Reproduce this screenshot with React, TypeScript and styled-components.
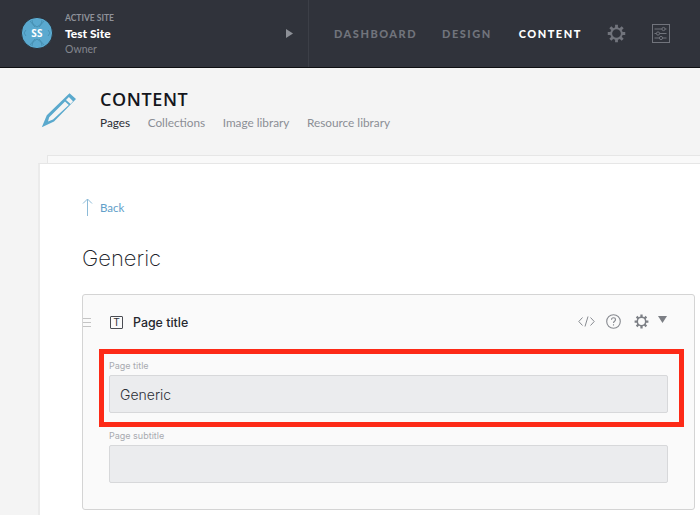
import React from "react";
import styled, { createGlobalStyle } from "styled-components";

const Global = createGlobalStyle`
  html, body { margin: 0; padding: 0; height: 515px; overflow: hidden; background: #f4f4f4; }
  body { font-family: "Lato", "Liberation Sans", sans-serif; }
  * { box-sizing: border-box; }
`;

const Page = styled.div`
  width: 700px;
  height: 515px;
  overflow: hidden;
  display: flex;
  flex-direction: column;
`;

const TopBar = styled.header`
  height: 68px;
  flex: none;
  background: #30333b;
  border-bottom: 1px solid #0f1012;
  display: flex;
`;

const SiteSwitcher = styled.div`
  width: 309px;
  flex: none;
  border-right: 1px solid #3c3f47;
  display: flex;
  align-items: center;
  padding: 0 15px 1px 21px;
`;

const Avatar = styled.div`
  width: 32px;
  height: 32px;
  position: relative;
  flex: none;
  margin-right: 12px;
  display: flex;
  align-items: center;
  justify-content: center;
  color: #fff;
  font: 700 10px "Open Sans", sans-serif;
  letter-spacing: 0.2px;
  & > svg { position: absolute; inset: 0; }
  & > span { position: relative; }
`;

const SiteText = styled.div`
  flex: 1;
  align-self: flex-start;
  margin-top: 13px;
  display: flex;
  flex-direction: column;
`;

const SiteKicker = styled.div`
  font-size: 8.5px;
  line-height: 11px;
  color: #8f929a;
  font-weight: 700;
  margin-bottom: 2px;
`;

const SiteName = styled.div`
  font-size: 12px;
  line-height: 15px;
  font-weight: 900;
  color: #fff;
  margin-bottom: 1px;
`;

const SiteRole = styled.div`
  font-size: 10.5px;
  line-height: 14px;
  color: #83868e;
`;

const MainNav = styled.nav`
  display: flex;
  align-items: center;
  padding-left: 25px;
  padding-bottom: 1px;
`;

const NavLink = styled.a<{ $active?: boolean; $gap: number }>`
  font-size: 11px;
  font-weight: 900;
  letter-spacing: 1.5px;
  color: ${(p) => (p.$active ? "#ffffff" : "#71747c")};
  margin-right: ${(p) => p.$gap}px;
  white-space: nowrap;
`;

const NavIcon = styled.span<{ $gap?: number }>`
  display: flex;
  margin-right: ${(p) => p.$gap ?? 0}px;
`;

const SubHeader = styled.div`
  height: 87px;
  flex: none;
  display: flex;
  padding: 21px 0 0 41px;
`;

const PencilSlot = styled.div`
  width: 59px;
  flex: none;
  margin-top: 3px;
`;

const SectionTitle = styled.h1`
  margin: 0;
  font-family: "Open Sans", sans-serif;
  font-size: 18px;
  line-height: 20px;
  font-weight: 600;
  letter-spacing: 0.6px;
  color: #14161c;
`;

const Tabs = styled.div`
  display: flex;
  gap: 17.5px;
  margin-top: 6px;
`;

const Tab = styled.a<{ $active?: boolean }>`
  font-size: 11.8px;
  line-height: 16px;
  color: ${(p) => (p.$active ? "#2c2f36" : "#8b8e94")};
  white-space: nowrap;
`;

const Stage = styled.div`
  flex: 1;
  padding-left: 38px;
  display: flex;
  flex-direction: column;
`;

const BackSheet = styled.div`
  height: 8px;
  flex: none;
  margin-left: 9px;
  background: #f9f9f9;
  border-top: 1px solid #e6e6e6;
  border-left: 1px solid #e6e6e6;
`;

const Sheet = styled.main`
  flex: 1;
  background: #fff;
  border-top: 1px solid #e6e6e6;
  border-left: 2px solid #ebebeb;
  padding: 34px 6px 0 42px;
`;

const BackLink = styled.a`
  display: flex;
  align-items: center;
  gap: 7px;
  height: 18px;
  font-size: 11.5px;
  color: #62a0c9;
`;

const Heading = styled.h2`
  margin: 27px 0 0;
  font-family: "Inter", sans-serif;
  font-size: 22px;
  line-height: 30px;
  font-weight: 200;
  color: #20232a;
`;

const Panel = styled.section`
  position: relative;
  margin-top: 21px;
  width: 613px;
  height: 216px;
  background: #fafafa;
  border: 1px solid #d4d4d4;
  border-radius: 3px;
  padding: 0 26px 0 26px;
`;

const Handle = styled.span`
  position: absolute;
  left: 0;
  top: 23px;
  width: 8px;
  height: 9px;
  border-top: 1px solid #c4c4c4;
  border-bottom: 1px solid #c4c4c4;
  &::after {
    content: "";
    display: block;
    margin-top: 3px;
    height: 1px;
    background: #c4c4c4;
  }
`;

const PanelHead = styled.div`
  height: 54px;
  display: flex;
  align-items: center;
  padding-top: 1px;
`;

const TypeBadge = styled.span`
  width: 13px;
  height: 13px;
  border: 1px solid #4a4c52;
  border-radius: 1px;
  display: flex;
  align-items: center;
  justify-content: center;
  font: 500 10px "Liberation Sans", sans-serif;
  color: #33353b;
  margin: 0 10px 0 1px;
`;

const PanelTitle = styled.span`
  flex: 1;
  font-family: "Inter", sans-serif;
  font-size: 12.4px;
  font-weight: 500;
  color: #26282e;
`;

const PanelTools = styled.div`
  display: flex;
  align-items: center;
  margin: 0 1px 2px 0;
`;

const Tool = styled.span<{ $gap: number }>`
  display: flex;
  margin-right: ${(p) => p.$gap}px;
`;

const Caret = styled.svg`
  margin-bottom: 5px;
`;

const Field = styled.div`
  margin-bottom: 17px;
`;

const FieldLabel = styled.label`
  display: block;
  font-family: "Inter", sans-serif;
  font-size: 9px;
  line-height: 12px;
  margin: 11px 0 3px;
  color: #a8aab0;
`;

const TextBox = styled.div`
  width: 559px;
  height: 38px;
  background: #ebecee;
  border: 1px solid #d7d8da;
  border-radius: 2px;
  padding-left: 10px;
  display: flex;
  align-items: center;
  font-family: "Inter", sans-serif;
  font-size: 14px;
  font-weight: 300;
  color: #2d3037;
`;

const Callout = styled.div`
  position: absolute;
  left: 16px;
  top: 54px;
  width: 585px;
  height: 78px;
  border: 5px solid #fd2a17;
  pointer-events: none;
`;

const Gear = ({ size, color }: { size: number; color: string }) => (
  <svg width={size} height={size} viewBox="0 0 20 20" fill="none" stroke={color}>
    <circle cx="10" cy="10" r="5.6" strokeWidth="2" />
    <g strokeWidth="3">
      <path d="M10 .8v3.4M10 15.8v3.4M.8 10h3.4M15.8 10h3.4M3.5 3.5l2.4 2.4M14.1 14.1l2.4 2.4M16.5 3.5l-2.4 2.4M5.9 14.1l-2.4 2.4" />
    </g>
  </svg>
);

const Sliders = () => (
  <svg width="18" height="19" viewBox="0 0 18 19" fill="none" stroke="#71747c" strokeWidth="1">
    <rect x=".5" y=".5" width="17" height="18" />
    <path d="M2.5 5h12M2.5 9.5h12M2.5 14h12" />
    <circle cx="11.5" cy="5" r="1.6" fill="#30333b" />
    <circle cx="6" cy="9.5" r="1.6" fill="#30333b" />
    <circle cx="9" cy="14" r="1.6" fill="#30333b" />
  </svg>
);

const Logo = () => (
  <svg width="32" height="32" viewBox="0 0 32 32" fill="none">
    <circle cx="16" cy="16" r="15.6" fill="#5aa9cf" stroke="#23262c" strokeWidth=".8" />
    <g stroke="#3a7f9f" strokeWidth=".6">
      <path d="M9 4l5 6M23 4l-5 6M9 28l5-6M23 28l-5-6" />
      <path d="M11 3c0 3 1.5 5 5 7 3.5-2 5-4 5-7M11 29c0-3 1.5-5 5-7 3.5 2 5 4 5 7" />
      <path d="M5 13l-2 3 2 3M27 13l2 3-2 3" />
    </g>
  </svg>
);

const Pencil = () => (
  <svg width="36" height="36" viewBox="0 0 36 36">
    <path
      d="M28.5 1.2 35 7 13 29.6 0.8 35.2 5.8 23.2Z M27.9 5 25 8 29.6 12.1 32 9.2 Z M24 9.6 8.2 25.2 7 29.6 12 27.6 27.8 12.9Z"
      fill="#5aa9cd"
      fillRule="evenodd"
    />
  </svg>
);

const Arrow = () => (
  <svg width="11" height="18" viewBox="0 0 11 18" fill="none" stroke="#8dbbd8" strokeWidth="1">
    <path d="M5.5 18V1M1 5.5 5.5 1 10 5.5" />
  </svg>
);

export default function App() {
  return (
    <Page>
      <Global />
      <TopBar>
        <SiteSwitcher>
          <Avatar>
            <Logo />
            <span>SS</span>
          </Avatar>
          <SiteText>
            <SiteKicker>ACTIVE SITE</SiteKicker>
            <SiteName>Test Site</SiteName>
            <SiteRole>Owner</SiteRole>
          </SiteText>
          <svg width="7" height="9" viewBox="0 0 7 9">
            <path d="M0 0l7 4.5L0 9z" fill="#8d9097" />
          </svg>
        </SiteSwitcher>
        <MainNav>
          <NavLink $gap={25}>DASHBOARD</NavLink>
          <NavLink $gap={27}>DESIGN</NavLink>
          <NavLink $active $gap={25}>CONTENT</NavLink>
          <NavIcon $gap={26}>
            <Gear size={19} color="#71747c" />
          </NavIcon>
          <NavIcon>
            <Sliders />
          </NavIcon>
        </MainNav>
      </TopBar>

      <SubHeader>
        <PencilSlot>
          <Pencil />
        </PencilSlot>
        <div>
          <SectionTitle>CONTENT</SectionTitle>
          <Tabs>
            <Tab $active>Pages</Tab>
            <Tab>Collections</Tab>
            <Tab>Image library</Tab>
            <Tab>Resource library</Tab>
          </Tabs>
        </div>
      </SubHeader>

      <Stage>
        <BackSheet />
        <Sheet>
          <BackLink>
            <Arrow />
            Back
          </BackLink>
          <Heading>Generic</Heading>
          <Panel>
            <Handle />
            <PanelHead>
              <TypeBadge>T</TypeBadge>
              <PanelTitle>Page title</PanelTitle>
              <PanelTools>
                <Tool $gap={11}>
                  <svg width="17" height="11" viewBox="0 0 17 11" fill="none" stroke="#878a90" strokeWidth="1">
                    <path d="M4.5 1.5.8 5.5l3.7 4M12.5 1.5l3.7 4-3.7 4M10 .5 7 10.5" />
                  </svg>
                </Tool>
                <Tool $gap={13}>
                  <svg width="15" height="15" viewBox="0 0 15 15" fill="none" stroke="#878a90" strokeWidth="1.1">
                    <circle cx="7.5" cy="7.5" r="6.8" />
                    <path d="M5.5 5.8c0-1.3 1-2 2-2s2 .7 2 1.9c0 1.6-2 1.6-2 3.3M7.5 10.2v1.2" />
                  </svg>
                </Tool>
                <Tool $gap={9}>
                  <Gear size={15} color="#7c7f85" />
                </Tool>
                <Caret width="9" height="7" viewBox="0 0 9 7">
                  <path d="M0 0h9L4.5 7z" fill="#7c7f85" />
                </Caret>
              </PanelTools>
            </PanelHead>
            <Field>
              <FieldLabel>Page title</FieldLabel>
              <TextBox>Generic</TextBox>
            </Field>
            <Field>
              <FieldLabel>Page subtitle</FieldLabel>
              <TextBox />
            </Field>
            <Callout />
          </Panel>
        </Sheet>
      </Stage>
    </Page>
  );
}
